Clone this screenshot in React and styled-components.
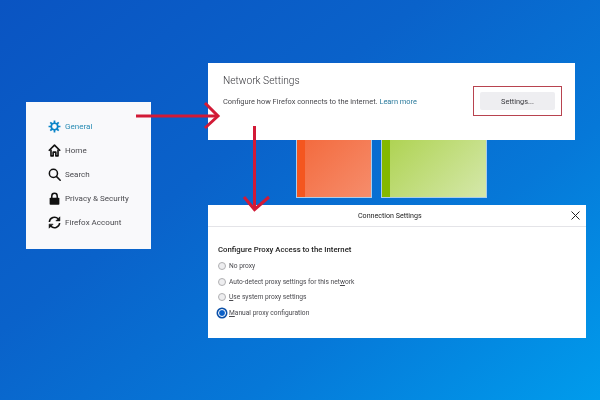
import React from 'react';
import styled, { createGlobalStyle, css } from 'styled-components';

const GlobalStyle = createGlobalStyle`
    html, body {
        margin: 0;
        padding: 0;
    }
    body {
        font-family: Roboto, "Liberation Sans", sans-serif;
    }
`

const menuItems = [
    { label: 'General', icon: 'gear', active: true },
    { label: 'Home', icon: 'home' },
    { label: 'Search', icon: 'search' },
    { label: 'Privacy & Security', icon: 'lock' },
    { label: 'Firefox Account', icon: 'sync' },
];

const MenuIcon = ({ name }) => {
    if (name === 'gear') {
        return (
            <svg width="13" height="13" viewBox="0 0 24 24" fill="none" stroke="#0a84c8" strokeWidth="3.2">
                <circle cx="12" cy="12" r="6" />
                <path d="M12 1v5M12 18v5M1 12h5M18 12h5M4.2 4.2l3.6 3.6M16.2 16.2l3.6 3.6M4.2 19.8l3.6-3.6M16.2 7.8l3.6-3.6" />
            </svg>
        );
    }
    if (name === 'home') {
        return (
            <svg width="13" height="13" viewBox="0 0 24 24" fill="none" stroke="#111" strokeWidth="3" strokeLinejoin="round">
                <path d="M1.5 12.5L12 2l10.500 10.500" />
                <path d="M5.500 10v12h4v-7h5v7h4V10" />
            </svg>
        );
    }
    if (name === 'search') {
        return (
            <svg width="13" height="13" viewBox="0 0 24 24" fill="none" stroke="#111" strokeWidth="2.800" strokeLinecap="round">
                <circle cx="10" cy="10" r="7.500" />
                <path d="M15.500 15.500L22.500 22.500" />
            </svg>
        );
    }
    if (name === 'lock') {
        return (
            <svg width="13" height="13" viewBox="0 0 24 24">
                <path d="M7 11V7.500a5 5 0 0 1 10 0V11" fill="none" stroke="#111" strokeWidth="2.800" />
                <rect x="3" y="10.500" width="18" height="13" rx="1.500" fill="#111" />
            </svg>
        );
    }
    return (
        <svg width="13" height="13" viewBox="0 0 24 24" fill="none" stroke="#111" strokeWidth="2.800">
            <path d="M2.500 11A9.500 9.500 0 0 1 19 5.500" />
            <path d="M21.500 13A9.500 9.500 0 0 1 5 18.500" />
            <path d="M22 1.500V9h-7.500z" fill="#111" strokeWidth="1" />
            <path d="M2 22.500V15h7.500z" fill="#111" strokeWidth="1" />
        </svg>
    );
};

const App = () => {
    return (
        <Desktop>
            <GlobalStyle />

            <Sidebar>
                {menuItems.map((item) => (
                    <MenuRow key={item.label} $active={item.active}>
                        <MenuIcon name={item.icon} />
                        <span>{item.label}</span>
                    </MenuRow>
                ))}
            </Sidebar>

            <Tile $left={296} $width={76} $stripe="#f4561f" $from="#f3693c" $to="#f68d6c" />
            <Tile $left={381} $width={106} $stripe="#84b800" $from="#add24f" $to="#d5e8ab" />

            <NetworkPanel>
                <NetworkText>
                    <NetworkTitle>Network Settings</NetworkTitle>
                    <NetworkBody>
                        Configure how Firefox connects to the internet. <LearnMore>Learn more</LearnMore>
                    </NetworkBody>
                </NetworkText>
                <Highlight>
                    <SettingsButton>Settings...</SettingsButton>
                </Highlight>
            </NetworkPanel>

            <ConnectionPanel>
                <DialogHeader>
                    <DialogTitle>Connection Settings</DialogTitle>
                    <svg width="9" height="9" viewBox="0 0 9 9" stroke="#222" strokeWidth="1">
                        <path d="M.5.5l8 8M8.500.5l-8 8" />
                    </svg>
                </DialogHeader>
                <DialogBody>
                    <ProxyHeading>Configure Proxy Access to the Internet</ProxyHeading>
                    <RadioRow><Radio /><span>No proxy</span></RadioRow>
                    <RadioRow><Radio /><span>Auto-detect proxy settings for this net<u>w</u>ork</span></RadioRow>
                    <RadioRow><Radio /><span><u>U</u>se system proxy settings</span></RadioRow>
                    <RadioRow><Radio $checked /><span><u>M</u>anual proxy configuration</span></RadioRow>
                </DialogBody>
            </ConnectionPanel>

            <Arrows width="600" height="400" viewBox="0 0 600 400" fill="none" stroke="#d21a36" strokeWidth="3">
                <path d="M136 116H217" />
                <path d="M205 103L218 116L205 128" />
                <path d="M254.500 126V209" />
                <path d="M244 197L254.500 209.500L269 197" />
            </Arrows>
        </Desktop>
    )
}

export default App;

// the reference is a slightly soft, upscaled image
const soft = css`
    filter: blur(0.35px);
`

const Desktop = styled.div`
    position: relative;
    width: 600px;
    height: 400px;
    overflow: hidden;
    background: linear-gradient(142deg, #0a54c2 0%, #0a62ca 38%, #0678d8 68%, #009cec 100%);
`
const Sidebar = styled.nav`
    ${soft}
    position: absolute;
    left: 26px;
    top: 102px;
    width: 125px;
    height: 147px;
    box-sizing: border-box;
    padding: 12px 0 0 22px;
    background: #f9f9fb;
`
const MenuRow = styled.div`
    display: flex;
    align-items: center;
    gap: 4px;
    height: 24px;
    font-size: 8.050px;
    color: ${props => props.$active ? '#2a8cb4' : '#4a4a4f'};
`
const Tile = styled.div`
    ${soft}
    position: absolute;
    left: ${props => props.$left}px;
    top: 140px;
    width: ${props => props.$width}px;
    height: 58px;
    box-sizing: border-box;
    border: 1px solid #a9cdec;
    border-top: 0;
    background:
        linear-gradient(${props => props.$stripe}, ${props => props.$stripe}) left / 8px 100% no-repeat,
        linear-gradient(135deg, ${props => props.$from}, ${props => props.$to});
    background-origin: padding-box;
    background-clip: padding-box;
`
const NetworkPanel = styled.section`
    ${soft}
    position: absolute;
    left: 208px;
    top: 63px;
    width: 367px;
    height: 77px;
    box-sizing: border-box;
    padding: 11px 13px 0 15px;
    display: flex;
    justify-content: space-between;
    align-items: flex-start;
    background: #fff;
`
const NetworkText = styled.div`
    display: flex;
    flex-direction: column;
    gap: 7.500px;
`
const NetworkTitle = styled.h2`
    margin: 0;
    font-size: 10.200px;
    line-height: 14px;
    font-weight: 300;
    color: #38383d;
`
const NetworkBody = styled.p`
    margin: 0;
    font-size: 7.450px;
    line-height: 12px;
    color: #4a4a4f;
`
const LearnMore = styled.span`
    color: #2a7a9c;
`
const Highlight = styled.div`
    margin-top: 12px;
    width: 89px;
    height: 30px;
    box-sizing: border-box;
    display: flex;
    align-items: center;
    justify-content: center;
    border: 1px solid #b8434f;
`
const SettingsButton = styled.div`
    width: 75px;
    height: 18px;
    display: flex;
    align-items: center;
    justify-content: center;
    border-radius: 2px;
    background: #eeeef1;
    font-size: 7.400px;
    color: #38383d;
`
const ConnectionPanel = styled.section`
    ${soft}
    position: absolute;
    left: 208px;
    top: 205px;
    width: 378px;
    height: 133px;
    background: #fff;
`
const DialogHeader = styled.header`
    height: 21.500px;
    box-sizing: border-box;
    padding: 0 6px 0 150px;
    display: flex;
    align-items: center;
    justify-content: space-between;
    border-bottom: 1px solid #e4e4e8;
`
const DialogTitle = styled.h3`
    margin: 0;
    font-size: 7.100px;
    font-weight: 400;
    color: #222;
`
const DialogBody = styled.div`
    padding: 17.500px 0 0 10px;
`
const ProxyHeading = styled.h4`
    margin: 0 0 2px;
    font-size: 7.750px;
    line-height: 12px;
    font-weight: 500;
    color: #222;
`
const RadioRow = styled.label`
    display: flex;
    align-items: center;
    gap: 3px;
    height: 15.700px;
    font-size: 6.650px;
    color: #4a4a4f;
`
const Radio = styled.span`
    width: 8px;
    height: 8px;
    flex: none;
    box-sizing: border-box;
    border-radius: 50%;
    border: 1px solid ${props => props.$checked ? '#fff' : '#b1b1b3'};
    background: ${props => props.$checked ? '#0a60c8' : '#eeeef0'};
    box-shadow: ${props => props.$checked ? '0 0 0 1.500px #0a4fa8' : 'none'};
`
const Arrows = styled.svg`
    ${soft}
    position: absolute;
    left: 0;
    top: 0;
    pointer-events: none;
`
